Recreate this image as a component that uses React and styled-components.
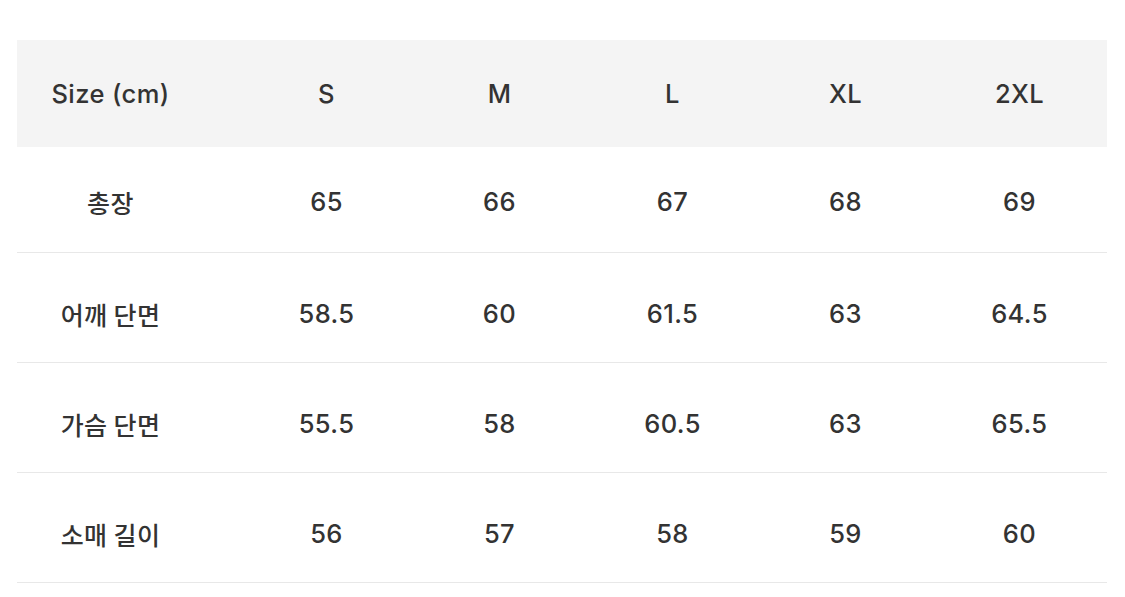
import React from 'react'
import styled, { createGlobalStyle } from 'styled-components'

const GlobalStyle = createGlobalStyle`
  body {
    margin: 0;
    background: #ffffff;
    font-family: Inter, "Noto Sans CJK KR", sans-serif;
    color: #333333;
  }
`

const Page = styled.div`
  padding: 40px 18px 0 17px;
`

const Table = styled.div`
  width: 1090px;
  display: grid;
  grid-template-columns: 223px repeat(4, 173px) 175px;
`

const Cell = styled.div`
  display: flex;
  align-items: center;
  justify-content: center;
  box-sizing: border-box;
  height: ${p => p.$h}px;
  padding-top: ${p => p.$pt}px;
  padding-right: ${p => (p.$first ? '36px' : '0')};
  background: ${p => (p.$head ? '#f4f4f4' : '#ffffff')};
  border-bottom: ${p => (p.$head ? 'none' : '1px solid #e8e8e8')};
  font-size: 25.5px;
  font-weight: 500;
  letter-spacing: 0.4px;
  color: #333333;
`

const Label = styled.span`
  font-family: "Noto Sans CJK KR", sans-serif;
  font-size: 25px;
  font-weight: 500;
  letter-spacing: 0.4px;
`

const sizes = ['S', 'M', 'L', 'XL', '2XL']

const rows = [
  ['총장', '65', '66', '67', '68', '69'],
  ['어깨 단면', '58.5', '60', '61.5', '63', '64.5'],
  ['가슴 단면', '55.5', '58', '60.5', '63', '65.5'],
  ['소매 길이', '56', '57', '58', '59', '60'],
]

export default function App() {
  return (
    <Page>
      <GlobalStyle />
      <Table>
        <Cell $head $first $h={107} $pt={0}>Size (cm)</Cell>
        {sizes.map(s => (
          <Cell $head $h={107} $pt={0} key={s}>{s}</Cell>
        ))}
        {rows.map((r, ri) =>
          r.map((v, i) => (
            <Cell
              key={r[0] + i}
              $first={i === 0}
              $h={ri === 0 ? 106 : 110}
              $pt={ri === 0 ? 4 : 12}
            >
              {i === 0 ? <Label>{v}</Label> : v}
            </Cell>
          ))
        )}
      </Table>
    </Page>
  )
}
